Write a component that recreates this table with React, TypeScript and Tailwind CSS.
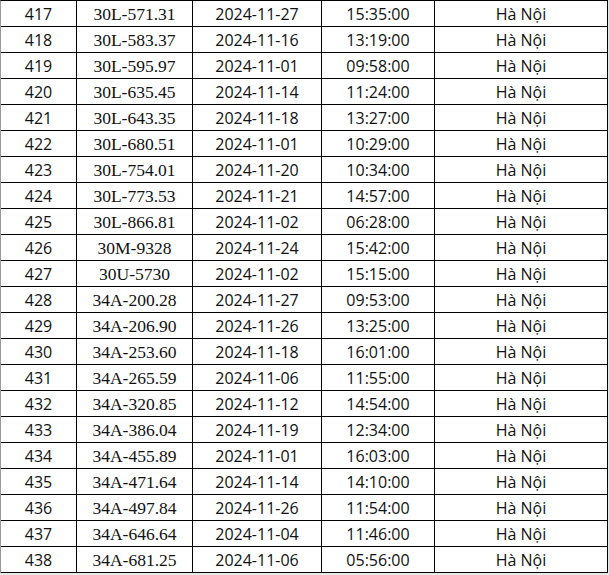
import React from 'react';

const ROWS: [number, string, string, string][] = [
  [417, '30L-571.31', '2024-11-27', '15:35:00'],
  [418, '30L-583.37', '2024-11-16', '13:19:00'],
  [419, '30L-595.97', '2024-11-01', '09:58:00'],
  [420, '30L-635.45', '2024-11-14', '11:24:00'],
  [421, '30L-643.35', '2024-11-18', '13:27:00'],
  [422, '30L-680.51', '2024-11-01', '10:29:00'],
  [423, '30L-754.01', '2024-11-20', '10:34:00'],
  [424, '30L-773.53', '2024-11-21', '14:57:00'],
  [425, '30L-866.81', '2024-11-02', '06:28:00'],
  [426, '30M-9328', '2024-11-24', '15:42:00'],
  [427, '30U-5730', '2024-11-02', '15:15:00'],
  [428, '34A-200.28', '2024-11-27', '09:53:00'],
  [429, '34A-206.90', '2024-11-26', '13:25:00'],
  [430, '34A-253.60', '2024-11-18', '16:01:00'],
  [431, '34A-265.59', '2024-11-06', '11:55:00'],
  [432, '34A-320.85', '2024-11-12', '14:54:00'],
  [433, '34A-386.04', '2024-11-19', '12:34:00'],
  [434, '34A-455.89', '2024-11-01', '16:03:00'],
  [435, '34A-471.64', '2024-11-14', '14:10:00'],
  [436, '34A-497.84', '2024-11-26', '11:54:00'],
  [437, '34A-646.64', '2024-11-04', '11:46:00'],
  [438, '34A-681.25', '2024-11-06', '05:56:00'],
];

const sans = "font-['Open_Sans','Liberation_Sans',sans-serif] text-[16px]";
const serif = "font-['Liberation_Serif',serif] text-[17.5px]";

export default function App() {
  return (
    <div className="w-[609px] h-[575px] bg-[#e8e8e8] text-[#111]">
      <div className="w-[608px] bg-white border-t border-black border-l border-l-[#9a9a9a] border-r border-r-black">
        {ROWS.map(([no, plate, date, time]) => (
          <div
            key={no}
            className="grid grid-cols-[76px_116px_129px_113px_172px] h-[26px] border-b border-black"
          >
            <div className={`flex items-center justify-center border-r border-black ${sans}`}>{no}</div>
            <div className={`flex items-center justify-center border-r border-black ${serif}`}>{plate}</div>
            <div className={`flex items-center justify-center border-r border-black ${sans}`}>{date}</div>
            <div className={`flex items-center justify-center border-r border-black ${sans}`}>{time}</div>
            <div className={`flex items-center justify-center ${sans}`}>Hà Nội</div>
          </div>
        ))}
      </div>
    </div>
  );
}
